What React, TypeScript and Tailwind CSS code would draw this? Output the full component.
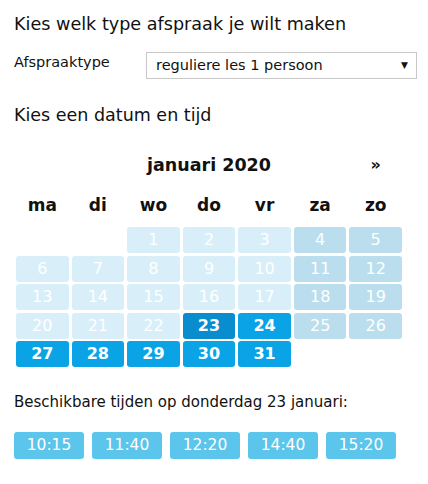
import React, { useState } from 'react';

type Day = { n: number; kind: 'past' | 'weekend' | 'open' };

const weekdays = ['ma', 'di', 'wo', 'do', 'vr', 'za', 'zo'];
const times = ['10:15', '11:40', '12:20', '14:40', '15:20'];

function buildDays(): (Day | null)[] {
  const cells: (Day | null)[] = [null, null];
  for (let n = 1; n <= 31; n++) {
    const col = (n + 1) % 7;
    let kind: Day['kind'] = 'past';
    if (n >= 23 && col < 5) kind = 'open';
    else if (col >= 5) kind = 'weekend';
    cells.push({ n, kind });
  }
  return cells;
}

export default function App() {
  const [selected, setSelected] = useState(23);
  const days = buildDays();

  return (
    <div className="min-h-screen bg-white pl-[14px] pt-[12px] text-[#111] font-['DejaVu_Sans',Verdana,sans-serif]">
      <h1 className="text-[17.6px] leading-[24px]">Kies welk type afspraak je wilt maken</h1>

      <div className="mt-[16px] flex items-start">
        <label className="w-[132px] text-[14.5px] leading-[20px]">Afspraaktype</label>
        <div className="flex h-[27px] w-[271px] items-center justify-between border border-[#c8c8c8] bg-white pl-[9px] pr-[8px] text-[14.5px]">
          <span>reguliere les 1 persoon</span>
          <span className="text-[9px]">▼</span>
        </div>
      </div>

      <h2 className="mt-[24px] text-[17.5px] leading-[24px]">Kies een datum en tijd</h2>

      <div className="mt-[23px] ml-[2px] w-[386px]">
        <div className="grid h-[30px] grid-cols-7 items-center gap-x-[3px] font-bold">
          <span />
          <span className="col-span-5 text-center text-[17.5px]">januari 2020</span>
          <span className="text-center text-[16px]">»</span>
        </div>
        <div className="mt-[11px] grid h-[30px] grid-cols-7 items-center gap-x-[3px] text-[17px] font-bold">
          {weekdays.map((d) => (
            <span key={d} className="text-center">{d}</span>
          ))}
        </div>
        <div className="mt-[6px] grid grid-cols-7 gap-x-[3px] gap-y-[2.5px]">
          {days.map((d, i) =>
            d === null ? (
              <div key={'e' + i} className="h-[26px]" />
            ) : (
              <button
                key={d.n}
                onClick={() => d.kind === 'open' && setSelected(d.n)}
                className={
                  'flex h-[26px] items-center justify-center rounded-[3px] text-[16px] text-white ' +
                  (d.kind === 'past'
                    ? 'bg-[#d8eff9]'
                    : d.kind === 'weekend'
                    ? 'bg-[#badeed]'
                    : selected === d.n
                    ? 'bg-[#0a8dcf] font-bold'
                    : 'bg-[#0aa4e6] font-bold')
                }
              >
                {d.n}
              </button>
            )
          )}
        </div>
      </div>

      <p className="mt-[25px] text-[15px] leading-[20px]">Beschikbare tijden op donderdag 23 januari:</p>

      <div className="mt-[20px] flex gap-[8px]">
        {times.map((t) => (
          <button
            key={t}
            className="flex h-[27px] w-[70px] items-center justify-center rounded-[3px] bg-[#5cc5eb] text-[15.5px] text-white"
          >
            {t}
          </button>
        ))}
      </div>
    </div>
  );
}
